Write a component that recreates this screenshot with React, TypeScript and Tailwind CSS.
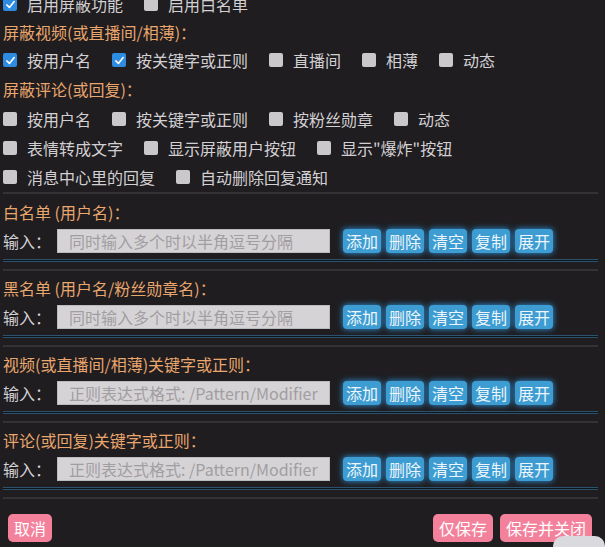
import React from "react";

const font = { fontFamily: '"Noto Sans CJK SC", "Noto Sans", sans-serif' };

function Box({ checked }: { checked?: boolean }) {
  if (checked) {
    return (
      <span className="w-[14px] h-[14px] rounded-[2px] bg-[#2d8be0] flex items-center justify-center shrink-0">
        <svg width="11" height="11" viewBox="0 0 12 12" fill="none">
          <path d="M2 6.5 L4.8 9.2 L10 2.8" stroke="white" strokeWidth="1.8" strokeLinecap="round" strokeLinejoin="round" />
        </svg>
      </span>
    );
  }
  return <span className="w-[14px] h-[14px] rounded-[2px] bg-[#cbc8cb] shrink-0" />;
}

type Opt = { label: string; checked?: boolean };

function CheckRow({ items, h = "h-[28px]" }: { items: Opt[]; h?: string }) {
  return (
    <div className={`flex items-center gap-[21px] ${h}`}>
      {items.map((it) => (
        <label key={it.label} className="flex items-center gap-[10px] text-[16px] text-[#d3d0d3] whitespace-nowrap">
          <Box checked={it.checked} />
          {it.label}
        </label>
      ))}
    </div>
  );
}

function Heading({ children, h = "h-[28px]" }: { children: React.ReactNode; h?: string }) {
  return <div className={`${h} flex items-center text-[16px] text-[#e9a66d] whitespace-nowrap`}>{children}</div>;
}

function ListSection({ title, placeholder, first }: { title: string; placeholder: string; first?: boolean }) {
  const btns = ["添加", "删除", "清空", "复制", "展开"];
  return (
    <div className={first ? "mt-[4px]" : "mt-[3px]"}>
      <Heading>{title}</Heading>
      <div className="mt-[3px] h-[24px] flex items-center">
        <span className="text-[16px] text-[#d3d0d3] w-[54px] whitespace-nowrap">输入：</span>
        <div className="w-[273px] h-[24px] bg-[#d6d3d6] border border-[#bdbabd] flex items-center pl-[11px] text-[16px] text-[#a19ea1] whitespace-nowrap overflow-hidden">
          {placeholder}
        </div>
        <div className="ml-[13px] flex gap-[5px]">
          {btns.map((b) => (
            <button
              key={b}
              className="h-[24px] px-[3px] rounded-[4px] bg-[#3d9dd3] text-[16px] leading-[24px] text-[#eef6fb] shadow-[0_0_6px_#2f9ae6]"
            >
              {b}
            </button>
          ))}
        </div>
      </div>
      <div className="mt-[6px] h-[3px] border-y border-[#2c5270] bg-[#0e1317]" />
      <div className="mt-[7px] h-[2px] bg-[#343236]" />
    </div>
  );
}

export default function App() {
  return (
    <div style={font} className="relative w-[605px] h-[547px] bg-[#1f1d20] overflow-hidden">
      <div className="-mt-[10px] pr-[7px] pl-[3px]">
        <CheckRow items={[{ label: "启用屏蔽功能", checked: true }, { label: "启用白名单" }]} />
        <Heading>屏蔽视频(或直播间/相薄)：</Heading>
        <CheckRow
          items={[
            { label: "按用户名", checked: true },
            { label: "按关键字或正则", checked: true },
            { label: "直播间" },
            { label: "相薄" },
            { label: "动态" },
          ]}
        />
        <Heading h="h-[30px]">屏蔽评论(或回复)：</Heading>
        <CheckRow
          h="h-[29px]"
          items={[{ label: "按用户名" }, { label: "按关键字或正则" }, { label: "按粉丝勋章" }, { label: "动态" }]}
        />
        <CheckRow
          h="h-[29px]"
          items={[{ label: "表情转成文字" }, { label: "显示屏蔽用户按钮" }, { label: "显示\"爆炸\"按钮" }]}
        />
        <CheckRow h="h-[29px]" items={[{ label: "消息中心里的回复" }, { label: "自动删除回复通知" }]} />
        <div className="mt-[1px] h-[2px] bg-[#343236]" />

        <ListSection first title="白名单 (用户名)：" placeholder="同时输入多个时以半角逗号分隔" />
        <ListSection title="黑名单 (用户名/粉丝勋章名)：" placeholder="同时输入多个时以半角逗号分隔" />
        <ListSection title="视频(或直播间/相薄)关键字或正则：" placeholder="正则表达式格式: /Pattern/Modifier" />
        <ListSection title="评论(或回复)关键字或正则：" placeholder="正则表达式格式: /Pattern/Modifier" />

        <div className="mt-[15px] flex items-center pl-[5px] pr-[6px]">
          <button className="h-[28px] px-[6px] rounded-[5px] bg-[#f4819c] text-[16px] text-white">取消</button>
          <div className="ml-auto flex gap-[7px]">
            <button className="h-[28px] px-[6px] rounded-[5px] bg-[#f4819c] text-[16px] text-white">仅保存</button>
            <button className="h-[28px] px-[6px] rounded-[5px] bg-[#f4819c] text-[16px] text-white">保存并关闭</button>
          </div>
        </div>
      </div>
      <div className="absolute left-[553px] top-[536px] w-[52px] h-[14px] rounded-t-[10px] bg-[#d9d9de]" />
    </div>
  );
}
